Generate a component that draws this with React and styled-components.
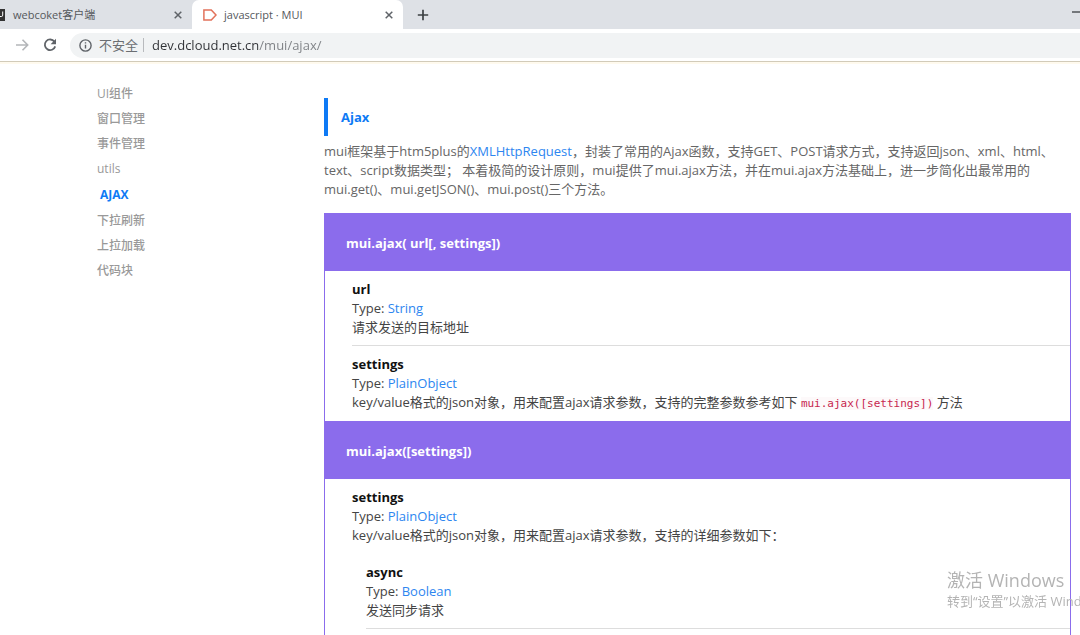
import React from "react";
import styled, { createGlobalStyle } from "styled-components";

const menu = [
  "UI组件",
  "窗口管理",
  "事件管理",
  "utils",
  "AJAX",
  "下拉刷新",
  "上拉加载",
  "代码块",
];

export default function App() {
  return (
    <Page>
      <GlobalStyle />
      <Browser />
      <Body>
        <SideNav />
        <Docs />
      </Body>
      <Watermark>
        <WatermarkTitle>激活 Windows</WatermarkTitle>
        <WatermarkText>转到“设置”以激活 Windows。</WatermarkText>
      </Watermark>
    </Page>
  );
}

const Browser = () => {
  return (
    <header>
      <TabBar>
        <Tab $width={192}>
          <SiteIcon />
          <TabTitle>webcoket客户端</TabTitle>
          <TabClose />
        </Tab>
        <Tab $width={211} $active>
          <MuiIcon />
          <TabTitle>javascript · MUI</TabTitle>
          <TabClose />
        </Tab>
        <NewTab aria-label="新标签页">
          <svg width="12" height="12" viewBox="0 0 12 12" stroke="#3c4043" strokeWidth="1.7">
            <path d="M6 0.8v10.4M0.8 6h10.4" />
          </svg>
        </NewTab>
        <Minimize aria-label="最小化" />
      </TabBar>
      <Toolbar>
        <ToolButton aria-label="前进">
          <svg width="14" height="14" viewBox="0 0 14 14" fill="none" stroke="#b4b6b9" strokeWidth="1.6">
            <path d="M1 7h11.5M7.5 1.8L12.7 7l-5.2 5.2" />
          </svg>
        </ToolButton>
        <ToolButton aria-label="重新加载">
          <svg width="14" height="14" viewBox="0 0 14 14" fill="none" stroke="#5f6368" strokeWidth="1.8">
            <path d="M11.4 3.6A5.3 5.3 0 1 0 12.2 8.4" />
            <path d="M13 0.8v5.4H7.6z" fill="#5f6368" stroke="none" />
          </svg>
        </ToolButton>
        <AddressBar>
          <svg width="13" height="13" viewBox="0 0 13 13" fill="none" stroke="#5f6368" strokeWidth="1.4">
            <circle cx="6.5" cy="6.5" r="5.6" />
            <path d="M6.5 5.8v3.8M6.5 3.2v1.4" />
          </svg>
          <Security htmlFor="address">不安全</Security>
          <Url id="address" defaultValue="dev.dcloud.net.cn/mui/ajax/" spellCheck="false" />
        </AddressBar>
      </Toolbar>
    </header>
  );
};

const TabClose = () => (
  <CloseButton aria-label="关闭">
    <svg width="8" height="8" viewBox="0 0 8 8" stroke="#5f6368" strokeWidth="1.5">
      <path d="M0.7 0.7l6.6 6.6M7.3 0.7L0.7 7.3" />
    </svg>
  </CloseButton>
);

const SiteIcon = () => (
  <svg width="5" height="12" viewBox="0 0 5 12">
    <path d="M0 0h5v12H0z" fill="#333" />
    <path d="M0 7.5h1.5q1.2 0 1.2-1.4V2.5" fill="none" stroke="#fff" />
  </svg>
);

const MuiIcon = () => (
  <svg width="14" height="12" viewBox="0 0 14 12" fill="none" stroke="#e2725b" strokeWidth="1.5">
    <path d="M0.9 0.9h7.4L13 6l-4.7 5.1H0.9z" />
  </svg>
);

const SideNav = () => {
  return (
    <Nav>
      {menu.map((name) => (
        <NavItem key={name} href="#" $active={name === "AJAX"}>
          {name}
        </NavItem>
      ))}
    </Nav>
  );
};

const Docs = () => {
  return (
    <Main>
      <Title>Ajax</Title>
      <Intro>
        mui框架基于htm5plus的<Link href="#">XMLHttpRequest</Link>，封装了常用的Ajax函数，支持GET、POST请求方式，支持返回json、xml、html、
        <br />
        text、script数据类型； 本着极简的设计原则，mui提供了mui.ajax方法，并在mui.ajax方法基础上，进一步简化出最常用的
        <br />
        mui.get()、mui.getJSON()、mui.post()三个方法。
      </Intro>
      <Api>
        <ApiTitle>mui.ajax( url[, settings])</ApiTitle>
        <Params>
          <Param name="url" type="String">
            请求发送的目标地址
          </Param>
          <Param name="settings" type="PlainObject" last>
            key/value格式的json对象，用来配置ajax请求参数，支持的完整参数参考如下 <Code>mui.ajax([settings])</Code> 方法
          </Param>
        </Params>
        <ApiTitle>mui.ajax([settings])</ApiTitle>
        <Params>
          <Param name="settings" type="PlainObject" last>
            key/value格式的json对象，用来配置ajax请求参数，支持的详细参数如下：
          </Param>
          <SubParams>
            <Param name="async" type="Boolean">
              发送同步请求
            </Param>
          </SubParams>
        </Params>
      </Api>
    </Main>
  );
};

const Param = ({ name, type, last, children }) => (
  <Entry $last={last}>
    <ParamName>{name}</ParamName>
    <p>
      Type: <Link href="#">{type}</Link>
    </p>
    <p>{children}</p>
  </Entry>
);

const GlobalStyle = createGlobalStyle`
* {
  box-sizing: border-box;
}
body {
  margin: 0;
  background: #fff;
  color: #444;
  font: 13px/19px "Open Sans", "Noto Sans CJK SC", sans-serif;
  overflow: hidden;
}
h1, h2, h3, p {
  margin: 0;
  font-size: inherit;
}
button {
  display: flex;
  align-items: center;
  justify-content: center;
  padding: 0;
  border: 0;
  background: none;
}
a {
  text-decoration: none;
}
svg {
  display: block;
  flex: none;
}
`

const Page = styled.div`
display: flex;
flex-direction: column;
min-height: 100vh;
`

const TabBar = styled.div`
display: flex;
height: 29px;
background: #dee1e6;
`

const Tab = styled.div`
display: flex;
align-items: center;
gap: ${(p) => (p.$active ? "7px" : "8px")};
width: ${(p) => p.$width}px;
padding: 0 10px 0 ${(p) => (p.$active ? "11px" : "0")};
border-radius: 7px 7px 0 0;
background: ${(p) => (p.$active ? "#fff" : "transparent")};
`

const TabTitle = styled.span`
flex: 1;
font-size: 11px;
color: #55585c;
white-space: nowrap;
`

const CloseButton = styled.button`
width: 8px;
height: 20px;
`

const NewTab = styled.button`
width: 39px;
`

const Minimize = styled.button`
width: 8px;
height: 2px;
margin: 11px 0 0 auto;
&& {
  background: #74777b;
}
`

const Toolbar = styled.div`
display: flex;
align-items: center;
gap: 14px;
height: 33px;
padding-left: 15px;
border-bottom: 1px solid #d2cbb9;
box-shadow: 0 2px #fffaee;
`

const ToolButton = styled.button`
width: 14px;
height: 24px;
`

const AddressBar = styled.div`
display: flex;
align-items: center;
flex: 1;
height: 25px;
margin-left: -1px;
padding-left: 9px;
border-radius: 13px 0 0 13px;
background: #f1f3f4;
`

const Security = styled.label`
margin-left: 7px;
padding-right: 5px;
border-right: 1px solid #b8babd;
line-height: 14px;
color: #6b6e72;
`

/* host is dark, path is grey */
const Url = styled.input`
flex: 1;
padding: 0 0 0 8px;
border: 0;
outline: 0;
font: inherit;
color: transparent;
caret-color: #333;
background: linear-gradient(90deg, #303236 115px, #7d8084 115px);
background-clip: text;
`

const Body = styled.div`
display: flex;
flex: 1;
`

const Nav = styled.nav`
display: flex;
flex-direction: column;
flex: none;
width: 324px;
padding: 19px 0 0 97px;
`

const NavItem = styled.a`
padding-left: ${(p) => (p.$active ? "3px" : "0")};
font-size: 12px;
font-weight: ${(p) => (p.$active ? "700" : "500")};
line-height: ${(p) => (p.$active ? "27px" : "25px")};
color: ${(p) => (p.$active ? "#0e7af5" : "#999")};
`

const Main = styled.main`
display: flex;
flex-direction: column;
flex: 1;
padding: 36px 9px 0 0;
`

const Title = styled.h1`
padding-left: 13px;
border-left: 4px solid #0e7af5;
line-height: 38px;
color: #0e7af5;
`

const Intro = styled.p`
padding: 6px 0 14px;
color: #666;
white-space: nowrap;
`

const Link = styled.a`
color: #2d86f0;
`

const Api = styled.section`
flex: 1;
border: 1px solid #8b6cec;
border-width: 0 1px;
`

const ApiTitle = styled.h2`
padding: 2px 0 0 21px;
line-height: 56px;
color: #fff;
background: #8b6cec;
`

const Params = styled.div`
padding-left: 27px;
`

const SubParams = styled.div`
padding-left: 14px;
`

const Entry = styled.div`
padding: 9px 0 8px;
border-bottom: 1px solid ${(p) => (p.$last ? "transparent" : "#ddd")};
`

const ParamName = styled.h3`
color: #111;
`

const Code = styled.code`
font: 11px/14px "DejaVu Sans Mono", monospace;
color: #c7254e;
background: #fdf9fa;
`

/* sits over the page, cut by the right edge of the window */
const Watermark = styled.div`
position: fixed;
right: 0;
bottom: 24px;
width: 133px;
overflow: hidden;
white-space: nowrap;
color: #b4b4b4;
pointer-events: none;
`

const WatermarkTitle = styled.p`
font-size: 18px;
line-height: 22px;
`

const WatermarkText = styled.p`
line-height: 20px;
`
